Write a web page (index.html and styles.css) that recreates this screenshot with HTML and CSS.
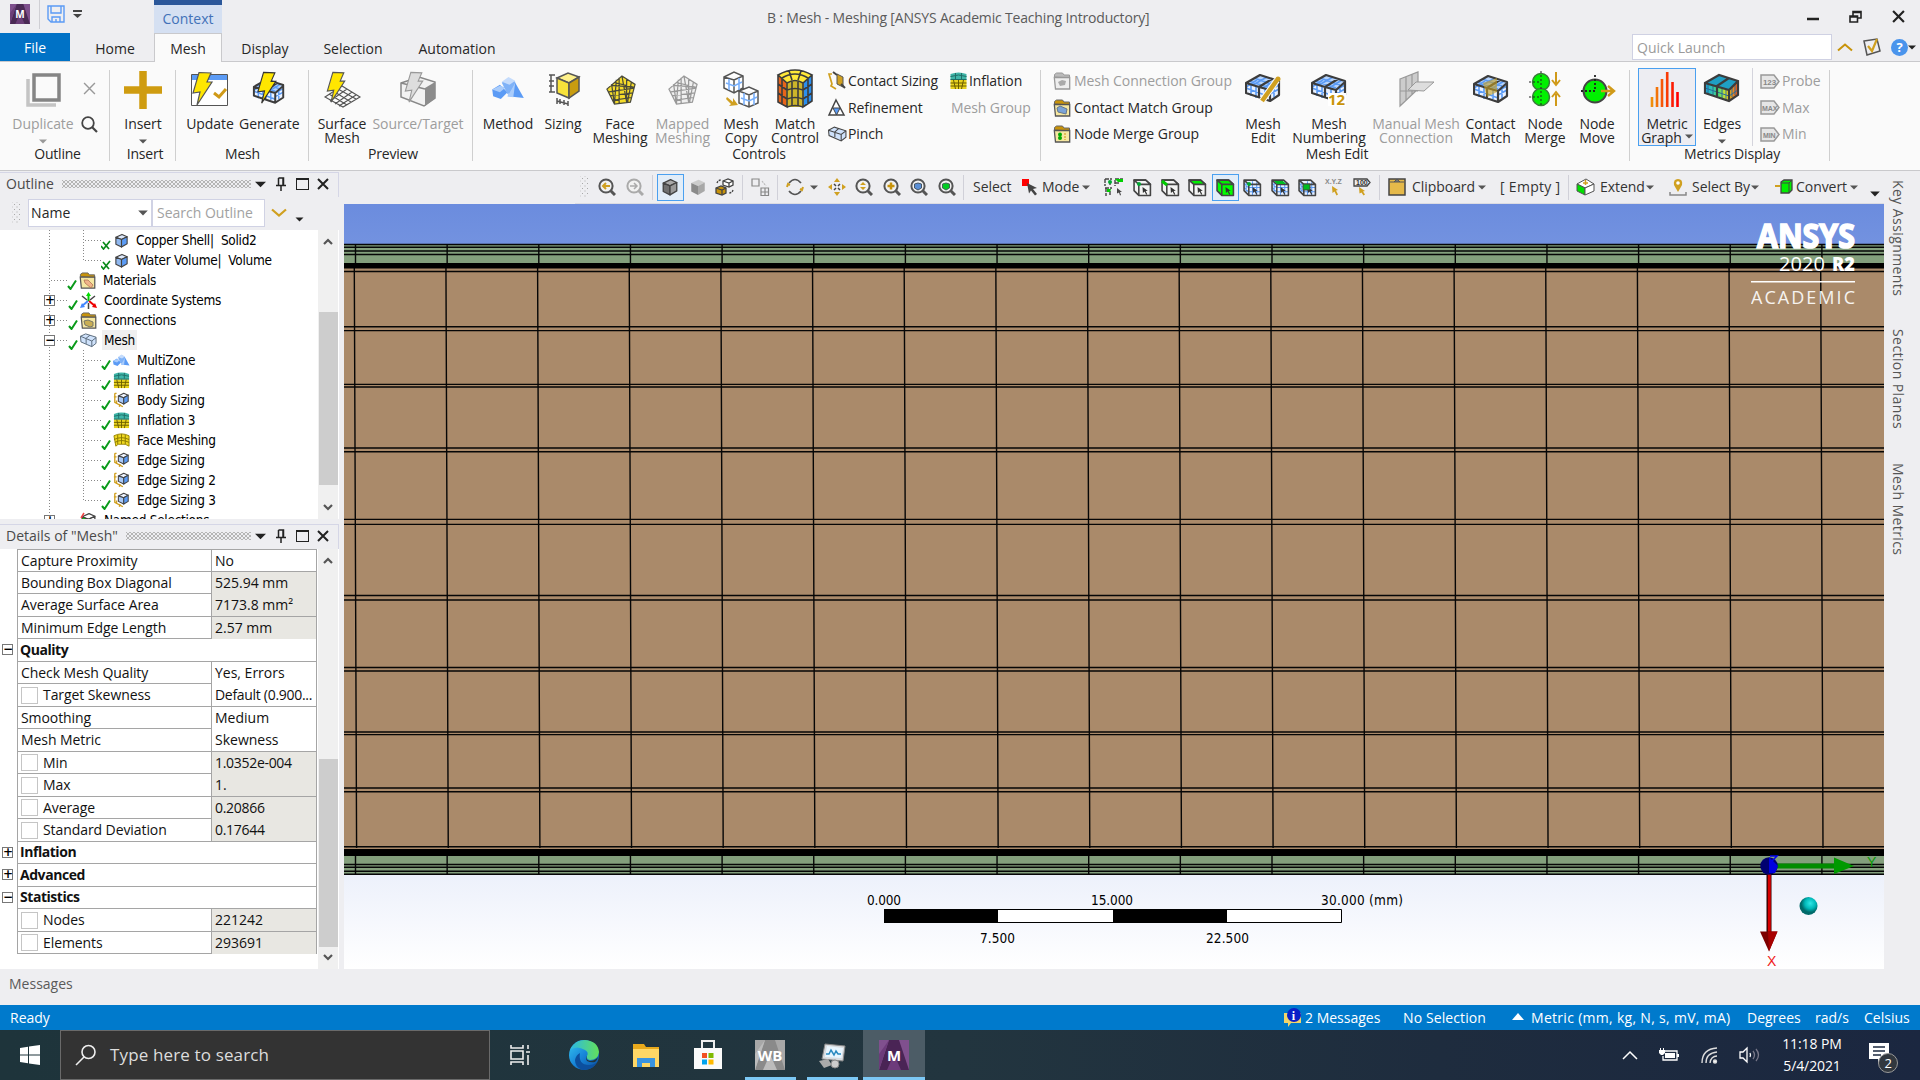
FILE: index.html
```html
<!DOCTYPE html>
<html lang="en">
<head>
<meta charset="utf-8">
<title>B : Mesh - Meshing</title>
<link rel="stylesheet" href="styles.css">
</head>
<body>
<svg class="defs" aria-hidden="true">
  <defs>
    <linearGradient id="bars" x1="0" x2="1"><stop offset="0" stop-color="#f0900c"/><stop offset="1" stop-color="#f00"/></linearGradient>
    <linearGradient id="edgeA" x1="0" y1="0" x2="1" y2="1"><stop offset="0" stop-color="#35c7f0"/><stop offset=".5" stop-color="#1784d8"/><stop offset="1" stop-color="#0c4f9e"/></linearGradient>
    <linearGradient id="edgeB" x1="0" x2="1"><stop offset="0" stop-color="#2bb8e6"/><stop offset="1" stop-color="#63e05a"/></linearGradient>
    <linearGradient id="heat" x1="0" x2="1"><stop offset="0" stop-color="#18a8e8"/><stop offset=".4" stop-color="#46dc7c"/><stop offset=".65" stop-color="#e8e020"/><stop offset="1" stop-color="#f04a18"/></linearGradient>
    <radialGradient id="cyanBall" cx=".6" cy=".35"><stop offset="0" stop-color="#2fe6e6"/><stop offset=".6" stop-color="#00b8b8"/><stop offset="1" stop-color="#006a6a"/></radialGradient>
  </defs>
  <symbol id="bolt" viewBox="0 0 36 36"><path d="M8 1.5 20 2l-4 9h5L6 34l3-13-7 1z" fill="var(--bolt,#ffe600)" stroke="var(--bline,#555)" stroke-width="1.2"/></symbol>
  <symbol id="cube" viewBox="0 0 16 16"><g stroke="var(--s,#444)" stroke-linejoin="round" stroke-width="1.2"><path d="M2 4.5 8.5 1.5 14 4 8 7z" fill="var(--t,#dde9fb)"/><path d="M2 4.5 8 7v8L2 12z" fill="var(--l,#8fb8f0)"/><path d="M8 7l6-3v7.500L8 15z" fill="var(--r,#5b9bf5)"/></g></symbol>
  <symbol id="pick" viewBox="0 0 18 18"><g fill="none" stroke="#444" stroke-width="1.500" stroke-linejoin="round"><path d="M1 2h11l4.500 4v10.500H5.500L1 12z" fill="var(--body,#f4f4f4)"/><path d="M1 2l4.500 4h11L12 2z" fill="var(--top,#f4f4f4)"/><path d="M5.500 6v10.500"/></g><path d="M9 8.500l5 3.500-2 .4 1.500 3-1 .5-1.500-3-1.600 1.300z" fill="#333"/></symbol>
  <symbol id="pickmesh" viewBox="0 0 18 18"><path d="M1 2h11l4.500 4v10.500H5.500L1 12z" fill="#e8f1ff"/><path d="M1 5l4 4h12M1 9l4 4h12M9 3v14M13 4v13M3 4v9" stroke="#5b9bf5" fill="none"/><g fill="none" stroke="#444" stroke-width="1.500" stroke-linejoin="round"><path d="M1 2h11l4.500 4v10.500H5.500L1 12zM1 2l4.500 4h11M5.500 6v10.500"/></g><path d="M9 8.500l5 3.500-2 .4 1.500 3-1 .5-1.500-3-1.600 1.300z" fill="#333"/></symbol>
  <symbol id="lens" viewBox="0 0 18 18"><circle cx="8" cy="8" r="6.600" fill="#f2f2f2" stroke="var(--s,#555)" stroke-width="2"/><path d="M12.500 12.500 17 17" stroke="var(--s,#555)" stroke-width="3"/></symbol>
  <symbol id="meshbox" viewBox="0 0 36 36"><path d="M1 11 15 3l19 6v14l-9 6L1 21z" fill="#eaf2ff"/><path d="M1 11 15 3l19 6-9 9z" fill="#b5d3fb"/><path d="M4 9l21 7M9 6l20 7M12 8 1 15m24 3 9-5M25 22l9-5M6 12v12M11 14v12M20 16v10M29 13v12M1 16l24 9M8 13 22 5M18 16 31 8" stroke="#5b9bf5" stroke-width="1.600" fill="none"/><path d="M1 11 15 3l19 6v14l-9 6L1 21zM1 11l13 4 11 3 9-8M14 15 27 7M14 15v11M25 18v11" fill="none" stroke="#3c3c3c" stroke-width="2.200" stroke-linejoin="round"/></symbol>
  <symbol id="folder" viewBox="0 0 17 18"><path d="M1 5V2.500L3 1h6l1.500 2H16v3z" fill="var(--f1,#c8930a)" stroke="var(--fs,#666)"/><path d="M.8 5.500h15.400V17H2z" fill="var(--f2,#f6e7a1)" stroke="var(--fs,#555)" stroke-width="1.300"/></symbol>
  <symbol id="penta" viewBox="0 0 32 32"><path d="M17 1 31 10l-5 19-17 2L1 15z" fill="var(--pf,#f5dc2a)"/><path d="M17 1 31 10l-5 19-17 2L1 15zM11 5l-2 26M14 3l0 27M17 1l5 28M22 4l0 25M27 8l-4 21M3 18l27-4M5 22l24-3M7 27l20-3M5 11l25 2M9 8l20 5M6 10l3 21" fill="none" stroke="var(--ps,#4a4a3a)" stroke-width="1.300"/></symbol>
  <symbol id="layers" viewBox="0 0 18 18"><path d="M1 2q8-3 16 0v6H1z" fill="#3fb5a8"/><path d="M1 8h16v9H1z" fill="#e8d21f"/><path d="M1 4.500q8-3 16 0M1 7.500h16M6 1v6M12 1v6" stroke="#1f6f68" fill="none"/><path d="M1 11h16M1 14h16M4 8l2 9M9 8v9M14 8l-2 9" stroke="#6b5d00" fill="none"/></symbol>
  <symbol id="check" viewBox="0 0 10 11"><path d="M1 7l2.500 3L9 1.500" stroke="#0a9a1a" stroke-width="2" fill="none"/></symbol>
  <symbol id="xcheck" viewBox="0 0 10 11"><path d="M0 7l2.500 3L9 2M2 3l6 7" stroke="#0a8a1a" stroke-width="1.700" fill="none"/></symbol>
  <symbol id="sizing" viewBox="0 0 19 18"><path d="M2 1v10l9 5M2 1h2M1 5h3M4 9v4M8 13l-1 3" stroke="#d0a020" stroke-width="1.500" fill="none"/><g stroke="#444" stroke-width="1.200" stroke-linejoin="round"><path d="M6 4l6-3 5 2-5 3z" fill="#eef4ff"/><path d="M6 4l6 2v7l-6-3z" fill="#a9c9f8"/><path d="M12 6l5-3v7l-5 3z" fill="#5b9bf5"/></g></symbol>
  <symbol id="method" viewBox="0 0 34 24"><path d="M0 13l8-5 8 8-7 7-8-3z" fill="#5b9bf5"/><path d="M0 13l8-4 6 2-6 5z" fill="#a9ccfb"/><path d="M10 6l7-5 7 4v9l-8 4z" fill="#7fb2f7"/><path d="M10 5l7-5 7 4-6 4z" fill="#c5dcfc"/><path d="M24 6l9 16-17-2z" fill="#5b9bf5"/><path d="M24 6l-8 14 6 1z" fill="#a9ccfb"/></symbol>
  <symbol id="car" viewBox="0 0 8 5"><path d="M0 .5h8L4 4.500z" fill="var(--c,#555)"/></symbol>
  <symbol id="chev" viewBox="0 0 10 7"><path d="M1 6l4-4 4 4" fill="none" stroke="#555" stroke-width="2.200"/></symbol>
  <symbol id="pin" viewBox="0 0 10 14"><path d="M2.500 1h5v7M2.500 1v7M7 1v7M0 8.500h10M5 9v5" stroke="#222" stroke-width="1.500" fill="none"/></symbol>
  <symbol id="close" viewBox="0 0 12 12"><path d="M1 1l10 10M11 1L1 11" stroke="#222" stroke-width="2" fill="none"/></symbol>
  <symbol id="tag" viewBox="0 0 20 15"><path d="M1 1h13l5 6.500-5 6.500H1z" fill="#e6e6e6" stroke="#999" stroke-width="1.500"/></symbol>
  <symbol id="tile" viewBox="0 0 30 30"><path d="M0 0h30v30H0z" fill="var(--a)"/><path d="M10 0h10l10 30H0z" fill="var(--b)"/><path d="M15 14l7 16H8zM10 0L0 30V14z" fill="var(--d)"/></symbol>
</svg>

<div class="app">
  <header class="top">
    <div class="titlebar">
      <div class="quick">
        <svg width="20" height="20" style="--a:#7d4f8c;--b:#4a2a55;--d:#6b3f78"><use href="#tile"/><text x="10" y="14" class="tile-m small">M</text></svg>
        <i class="vline"></i>
        <svg width="18" height="18" viewBox="0 0 18 18" fill="none" stroke="#5b9bf5" stroke-width="1.400"><path d="M1 1h16v16H4l-3-3zM4 1v7h10V1M5 17v-5h8v5M9 14v3"/></svg>
        <svg width="9" height="8" viewBox="0 0 9 8"><path d="M0 0h9v2H0zM0 4h9L4.500 8z" fill="#444"/></svg>
      </div>
      <div class="context">Context</div>
      <div class="title">B : Mesh - Meshing [ANSYS Academic Teaching Introductory]</div>
      <div class="winbtns">
        <svg width="12" height="12" viewBox="0 0 12 12"><path d="M0 9h12" stroke="#222" stroke-width="2.500"/></svg>
        <svg width="13" height="13" viewBox="0 0 13 13" fill="none" stroke="#222" stroke-width="1.600"><path d="M1 6h7.500v6H1zM4 6V1.500h8V8H9M4 2.500h8M1 7h7"/></svg>
        <svg width="13" height="13"><use href="#close"/></svg>
      </div>
    </div>
    <nav class="tabs">
      <span class="tab file">File</span><span class="tab t-home">Home</span><span class="tab active">Mesh</span><span class="tab t-disp">Display</span><span class="tab t-sel">Selection</span><span class="tab t-auto">Automation</span>
      <div class="launch">
        <span class="launch-box">Quick Launch</span>
        <svg width="16" height="10" viewBox="0 0 16 10"><path d="M1 8.500l7-6 7 6" fill="none" stroke="#c8930a" stroke-width="2"/></svg>
        <svg width="18" height="18" viewBox="0 0 18 18" fill="none"><path d="M1 3l13-2 3 12-13 4z" stroke="#555" stroke-width="1.500"/><path d="M5 8l4 5 5-12" stroke="#d0a020" stroke-width="2.200"/></svg>
        <span class="help"><b>?</b><svg width="8" height="5" style="--c:#222"><use href="#car"/></svg></span>
      </div>
    </nav>
  </header>

  <section class="ribbon">
    <div class="group g-outline">
      <div class="items">
        <div class="item off"><svg class="ic" viewBox="0 0 36 36"><path d="M3 8v26h28" fill="none" stroke="#c4c4c4" stroke-width="3.500"/><path d="M9 4h25v25H9z" fill="#fafafa" stroke="#858585" stroke-width="3.500"/></svg>Duplicate<svg class="dn" style="--c:#999"><use href="#car"/></svg></div>
        <div class="pair"><svg width="13" height="13" viewBox="0 0 12 12"><path d="M1 1l10 10M11 1L1 11" stroke="#999" stroke-width="1.300"/></svg><svg width="17" height="17" viewBox="0 0 17 17" fill="none" stroke="#444"><circle cx="7" cy="7" r="5.800" stroke-width="1.800"/><path d="M11 11l5 5" stroke-width="2.200"/></svg></div>
      </div>
      <div class="label">Outline</div>
    </div>
    <div class="group g-insert">
      <div class="items"><div class="item"><svg class="ic" viewBox="0 0 36 36"><path d="M18 0v38M-1 19h38" stroke="#cf9c10" stroke-width="7.500"/></svg>Insert<svg class="dn"><use href="#car"/></svg></div></div>
      <div class="label">Insert</div>
    </div>
    <div class="group g-mesh">
      <div class="items">
        <div class="item"><svg class="ic" viewBox="0 0 36 36"><path d="M-.5 3.500h36v31h-36z" fill="#fff" stroke="#555"/><path d="M0 4h35v5H0z" fill="#5b9bf5"/><path d="M22 22l5 4 7-8" fill="none" stroke="#d09a18" stroke-width="3"/><use href="#bolt" width="36" height="36" x="-1"/></svg>Update</div>
        <div class="item"><svg class="ic" viewBox="0 0 36 36"><use href="#meshbox" y="6" width="36" height="32"/><use href="#bolt" x="4" width="36" height="34" style="--bline:#333"/></svg>Generate</div>
      </div>
      <div class="label">Mesh</div>
    </div>
    <div class="group g-preview">
      <div class="items">
        <div class="item"><svg class="ic" viewBox="0 0 36 36"><g fill="none" stroke="#555" stroke-width="1.100"><path d="M1 26l17-11 18 11-17 10zM5 23l18 11M9 20l18 11M14 18l18 10M6 30l17-12M11 33l17-12M15 35l17-11"/></g><use href="#bolt" width="36" height="33"/></svg>Surface<br>Mesh</div>
        <div class="item off"><svg class="ic" viewBox="0 0 36 36"><path d="M1 12l18-6 16 5v16L24 35 1 26z" fill="#f2f2f2" stroke="#888" stroke-width="1.500"/><path d="M25 17l10-6v16l-10 8z" fill="#8c8c8c"/><path d="M1 12l24 6" stroke="#888" stroke-width="1.500"/><use href="#bolt" width="36" height="33" x="2" style="--bolt:#ddd;--bline:#999"/></svg>Source/Target</div>
      </div>
      <div class="label">Preview</div>
    </div>
    <div class="group g-controls">
      <div class="items">
        <div class="item"><svg class="ic" viewBox="0 0 36 36"><use href="#method" x="2" y="6" width="33" height="23"/></svg>Method</div>
        <div class="item"><svg class="ic" viewBox="0 0 36 36"><g stroke="#555" stroke-width="1.500"><path d="M12 7 23 2l11 4-10 6z" fill="#fdf08a"/><path d="M12 7l12 5v15l-12-5z" fill="#f7e23a"/><path d="M24 12l10-6v14l-10 7z" fill="#c89c10"/><path d="M6 4v17M4 4h6M4 10h5M4 15h5M4 21h6M12 27v6M23 30v5M12 30l11 3M15 28v5M19 29v5" fill="none"/></g></svg>Sizing</div>
        <div class="item"><svg class="ic" viewBox="0 0 36 36"><use href="#penta" x="4" y="4" width="30" height="30"/></svg>Face<br>Meshing</div>
        <div class="item off"><svg class="ic" viewBox="0 0 36 36"><use href="#penta" x="3" y="4" width="30" height="30" style="--pf:#efefef;--ps:#999"/></svg>Mapped<br>Meshing</div>
        <div class="item"><svg class="ic" viewBox="0 0 36 36"><g stroke="#555" stroke-width="1.500" fill="#fff"><path d="M1 6l10-5 9 4v12l-9 5-10-5zM1 6l10 3 9-4M11 9v13M16 20l10-4 9 4v12l-9 4-10-4zM16 20l10 4 9-4M26 24v12"/></g><path d="M3 12l8 3 8-4M6 8v11M16 7v12M18 27l8 3 8-4M21 22v12M31 22v12" stroke="#7ab0fa" stroke-width="1.600" fill="none"/><path d="M4 26l6 5v-4l5 7-9 1 2-2-5-5z" fill="#d0a020"/></svg>Mesh<br>Copy</div>
        <div class="item"><svg class="ic big" viewBox="0 0 36 40"><path d="M1 6l8 6v26l-8-5z" fill="#e8641a"/><path d="M9 12l18 0v26H9z" fill="#cdb52a"/><path d="M27 12l8-6v26l-8 6z" fill="#2a8ff0"/><path d="M1 6q17-10 34 0l-9 8q-8-5-16 0z" fill="#ffe838"/><path d="M1 6q17-10 34 0l-9 8q-8-5-16 0zM5 9q13-8 26 0M12 2l3 9M24 2l-3 9M1 6v27l9 5V13M35 6v26l-9 6V13M5 10v25M31 10v25M1 15l9 6q8-3 16 0l9-6M1 24l9 6q8-3 16 0l9-6M10 38q8-3 16 0M15 12v25M21 12v25" fill="none" stroke="#3c3c3c" stroke-width="1.600"/></svg>Match<br>Control</div>
        <div class="stack">
          <div class="row"><svg width="19" height="18" viewBox="0 0 19 18"><path d="M4 2H1l3 10-1 2 5 3" fill="none" stroke="#d0a020" stroke-width="1.700"/><path d="M9 2l6 3v10l-6-3z" fill="#d0a020" stroke="#555"/><path d="M5 0l4 3M13 12l4 4" stroke="#444" stroke-width="2"/></svg>Contact Sizing</div>
          <div class="row"><svg width="19" height="18" viewBox="0 0 19 18"><path d="M8 1l8 15H1z" fill="#fff" stroke="#444" stroke-width="1.500"/><path d="M5 9h7l-3.500 7z" fill="#5b9bf5" stroke="#444"/></svg>Refinement</div>
          <div class="row"><svg width="19" height="18" viewBox="0 0 36 34"><path d="M1 10 12 4l22 7v12l-9 7L2 20z" fill="#cfe2fb" stroke="#444" stroke-width="2"/><path d="M1 10l24 8 9-7M25 18v12M12 14l8-7M13 14v9" fill="none" stroke="#444" stroke-width="2"/></svg>Pinch</div>
        </div>
        <div class="stack s2">
          <div class="row"><svg width="19" height="18"><use href="#layers"/></svg>Inflation</div>
          <div class="row off nog">Mesh Group</div>
        </div>
      </div>
      <div class="label">Controls</div>
    </div>
    <div class="group g-edit">
      <div class="items">
        <div class="stack">
          <div class="row off"><svg width="18" height="18" style="--f1:#bbb;--f2:#eee;--fs:#999"><use href="#folder"/><path d="M5 10l4-2 4 1-1 4-5 1z" fill="#aaa"/></svg>Mesh Connection Group</div>
          <div class="row"><svg width="18" height="18"><use href="#folder"/><path d="M4 9l3-2 7 3-1 5-8-2z" fill="#7ba3d8" stroke="#678"/></svg>Contact Match Group</div>
          <div class="row"><svg width="18" height="18"><use href="#folder"/><circle cx="7" cy="9.500" r="2" fill="#0a0"/><circle cx="7" cy="13" r="2" fill="#0a0"/><path d="M12 8v7" stroke="#c8930a" stroke-dasharray="2 1"/></svg>Node Merge Group</div>
        </div>
        <div class="item"><svg class="ic" viewBox="0 0 36 36"><use href="#meshbox" y="1" width="36" height="36"/><path d="M17 30 32 9" stroke="#fafafa" stroke-width="6.500"/><path d="M17 30 32 9" stroke="#d0a020" stroke-width="4.500"/><circle cx="33" cy="8" r="2.500" fill="#d0a020"/></svg>Mesh<br>Edit</div>
        <div class="item"><svg class="ic" viewBox="0 0 36 36"><use href="#meshbox" y="1" width="36" height="36"/><path d="M17 22h18v13H17z" fill="#fff"/><text x="17" y="34" class="n12">12</text></svg>Mesh<br>Numbering</div>
        <div class="item off"><svg class="ic" viewBox="0 0 36 36"><path d="M2 8l18-7v17L2 35zM8 6v23M14 3v20M2 20h18" fill="#ccc" stroke="#999" stroke-width="1.200"/><path d="M10 19l8-8h18l-10 9z" fill="#ddd" stroke="#999"/></svg>Manual Mesh<br>Connection</div>
        <div class="item"><svg class="ic" viewBox="0 0 36 36"><use href="#meshbox" y="2" width="36" height="36"/><path d="M10 12l14-5v14l-10 5z" fill="#c8a020" opacity=".6"/></svg>Contact<br>Match</div>
        <div class="item"><svg class="ic" viewBox="0 0 36 36"><g stroke="#3a7a3a" stroke-width="1.500"><circle cx="14" cy="11" r="8.500" fill="#00f000"/><circle cx="14" cy="26" r="8.500" fill="#00f000"/></g><path d="M14 0v36M2 11h12M2 26h12" stroke="#222" stroke-dasharray="2 2"/><path d="M29 1v12M25 9l4 5 4-5M29 35V23M25 26l4-5 4 5" stroke="#d09a18" stroke-width="2" fill="none"/></svg>Node<br>Merge</div>
        <div class="item"><svg class="ic" viewBox="0 0 36 36"><circle cx="16" cy="20" r="11.500" fill="#00f000" stroke="#444" stroke-width="2"/><path d="M16 4v16H0" fill="none" stroke="#222" stroke-width="1.800" stroke-dasharray="2 2"/><path d="M22 20h12M29 15l6 5-6 5" stroke="#d09a18" stroke-width="2.400" fill="none"/></svg>Node<br>Move</div>
      </div>
      <div class="label">Mesh Edit</div>
    </div>
    <div class="group g-metrics">
      <div class="items">
        <div class="item on"><svg class="ic" viewBox="0 0 36 36"><path d="M3 36V26M8 36V16M13 36V8M18.200 36V1M23.500 36V11M28.500 36V21" stroke="url(#bars)" stroke-width="2.600"/></svg>Metric<br>Graph<svg class="in"><use href="#car"/></svg></div>
        <div class="item edges"><svg class="ic" viewBox="0 0 36 36"><path d="M1 12 15 4l19 6v14l-9 6L1 22z" fill="url(#heat)"/><path d="M4 13v9M9 14v10M18 18v9M22 19v10M28 14v12M31 13v11M1 17l24 8 9-6" stroke="#2a6a9a" fill="none"/><path d="M1 12l14-8 19 6-9 9z" fill="#1f9fc4"/><path d="M1 12 15 4l19 6v14l-9 6L1 22zM1 12l24 7 9-9M13 15l12-8M13 16v11M25 19v11" fill="none" stroke="#3c3c3c" stroke-width="2.200"/></svg>Edges<svg class="dn"><use href="#car"/></svg></div>
        <i class="isep"></i>
        <div class="stack off">
          <div class="row"><svg width="20" height="15"><use href="#tag"/><text x="3" y="11" class="tg">123</text></svg>Probe</div>
          <div class="row"><svg width="20" height="15"><use href="#tag"/><text x="2" y="10.500" class="tg s">MAX</text></svg>Max</div>
          <div class="row"><svg width="20" height="15"><use href="#tag"/><text x="3" y="10.500" class="tg s">MIN</text></svg>Min</div>
        </div>
      </div>
      <div class="label">Metrics Display</div>
    </div>
  </section>

  <main class="work">
    <aside class="left">
      <div class="phead"><span>Outline</span><i class="dots"></i><svg width="11" height="7" style="--c:#222"><use href="#car"/></svg><svg width="10" height="14"><use href="#pin"/></svg><i class="sq"></i><svg width="12" height="12"><use href="#close"/></svg></div>
      <div class="find"><i class="grip"></i><span class="combo">Name<svg width="10" height="6"><use href="#car"/></svg></span><span class="search">Search Outline</span><svg width="16" height="10" viewBox="0 0 16 10"><path d="M1 1.500l7 6 7-6" fill="none" stroke="#d0a020" stroke-width="2.200"/></svg><svg class="low" width="9" height="5" style="--c:#222"><use href="#car"/></svg></div>
      <div class="scroller treebox">
        <ul class="tree">
          <li class="l3"><i class="tw"></i><svg class="ck"><use href="#xcheck"/></svg><svg class="ti cb"><use href="#cube"/></svg><span>Copper Shell|&nbsp; Solid2</span></li>
          <li class="l3 end"><i class="tw"></i><svg class="ck"><use href="#xcheck"/></svg><svg class="ti cb"><use href="#cube"/></svg><span>Water Volume|&nbsp; Volume</span></li>
          <li class="l2"><i class="tw"></i><svg class="ck"><use href="#check"/></svg><svg class="ti"><use href="#folder"/><path d="M5 8h4l5 5-2 3-6-5z" fill="#f0b48a" stroke="#a86a4a" stroke-width=".7"/></svg><span>Materials</span></li>
          <li class="l2"><b class="pm">+</b><i class="tw"></i><svg class="ck"><use href="#check"/></svg><svg class="ti" viewBox="0 0 17 17"><path d="M8.500 9V2" stroke="#0c0" stroke-width="2"/><path d="M6 4l2.500-4L11 4z" fill="#0d0"/><path d="M8 9l-6 5" stroke="#48f" stroke-width="2"/><path d="M0 16l2-5 3 4z" fill="#48f"/><path d="M9 9l6 5" stroke="#e00" stroke-width="2"/><path d="M17 16l-5-1 3-4z" fill="#e00"/><path d="M2 4l5 4M15 4l-5 4M8.500 11v6" stroke="#444" stroke-width="1.500"/></svg><span>Coordinate Systems</span></li>
          <li class="l2"><b class="pm">+</b><i class="tw"></i><svg class="ck"><use href="#check"/></svg><svg class="ti"><use href="#folder"/><path d="M4 9l4-1 5 2v4l-3 1-5-2z" fill="#c9ae55" stroke="#776"/></svg><span>Connections</span></li>
          <li class="l2"><b class="pm">−</b><i class="tw"></i><svg class="ck"><use href="#check"/></svg><svg class="ti" viewBox="0 0 36 34"><path d="M1 8 12 3l22 7v13l-9 7L2 20z" fill="#cfe2fb" stroke="#567" stroke-width="2"/><path d="M1 8l24 10 9-7M25 18v12M12 13l9-7M13 14v10" fill="none" stroke="#567" stroke-width="2"/></svg><span class="cur">Mesh</span></li>
          <li class="l3"><i class="tw"></i><svg class="ck"><use href="#check"/></svg><svg class="ti"><use href="#method"/></svg><span>MultiZone</span></li>
          <li class="l3"><i class="tw"></i><svg class="ck"><use href="#check"/></svg><svg class="ti"><use href="#layers"/></svg><span>Inflation</span></li>
          <li class="l3"><i class="tw"></i><svg class="ck"><use href="#check"/></svg><svg class="ti"><use href="#sizing"/></svg><span>Body Sizing</span></li>
          <li class="l3"><i class="tw"></i><svg class="ck"><use href="#check"/></svg><svg class="ti"><use href="#layers"/></svg><span>Inflation 3</span></li>
          <li class="l3"><i class="tw"></i><svg class="ck"><use href="#check"/></svg><svg class="ti" viewBox="0 0 18 18"><path d="M1 4q8-4 16 0v11q-4-3-8-2-4-1-6 2z" fill="#f0d820" stroke="#998400"/><path d="M1 8q8-4 16 0M2 11q7-4 15 0M5 3v10M9 2v11M13 3v10" fill="none" stroke="#8a7a00"/></svg><span>Face Meshing</span></li>
          <li class="l3"><i class="tw"></i><svg class="ck"><use href="#check"/></svg><svg class="ti"><use href="#sizing"/></svg><span>Edge Sizing</span></li>
          <li class="l3"><i class="tw"></i><svg class="ck"><use href="#check"/></svg><svg class="ti"><use href="#sizing"/></svg><span>Edge Sizing 2</span></li>
          <li class="l3 end"><i class="tw"></i><svg class="ck"><use href="#check"/></svg><svg class="ti"><use href="#sizing"/></svg><span>Edge Sizing 3</span></li>
          <li class="l2"><b class="pm">+</b><i class="tw none"></i><svg class="ck"></svg><svg class="ti"><use href="#cube" style="--l:#0d0;--t:#fff;--r:#fff"/><path d="M4 1L1 6" stroke="#e44" stroke-width="1.500"/></svg><span>Named Selections</span></li>
        </ul>
        <div class="sbar"><svg width="10" height="7"><use href="#chev"/></svg><i class="thumb th1"></i><svg class="flip" width="10" height="7"><use href="#chev"/></svg></div>
      </div>
      <div class="phead ph2"><span>Details of "Mesh"</span><i class="dots"></i><svg width="11" height="7" style="--c:#222"><use href="#car"/></svg><svg width="10" height="14"><use href="#pin"/></svg><i class="sq"></i><svg width="12" height="12"><use href="#close"/></svg></div>
      <div class="scroller detbox">
        <div class="details">
          <div class="d"><span>Capture Proximity</span><em class="w">No</em></div>
          <div class="d"><span>Bounding Box Diagonal</span><em>525.94 mm</em></div>
          <div class="d"><span>Average Surface Area</span><em>7173.8 mm²</em></div>
          <div class="d"><span>Minimum Edge Length</span><em>2.57 mm</em></div>
          <div class="d h"><b class="pm">−</b><span>Quality</span></div>
          <div class="d"><span>Check Mesh Quality</span><em class="w">Yes, Errors</em></div>
          <div class="d c"><span>Target Skewness</span><em class="w n">Default (0.900...</em></div>
          <div class="d"><span>Smoothing</span><em class="w">Medium</em></div>
          <div class="d"><span>Mesh Metric</span><em class="w">Skewness</em></div>
          <div class="d c"><span>Min</span><em class="n">1.0352e-004</em></div>
          <div class="d c"><span>Max</span><em>1.</em></div>
          <div class="d c"><span>Average</span><em class="n">0.20866</em></div>
          <div class="d c"><span>Standard Deviation</span><em class="n">0.17644</em></div>
          <div class="d h"><b class="pm">+</b><span>Inflation</span></div>
          <div class="d h"><b class="pm">+</b><span>Advanced</span></div>
          <div class="d h"><b class="pm">−</b><span>Statistics</span></div>
          <div class="d c"><span>Nodes</span><em>221242</em></div>
          <div class="d c"><span>Elements</span><em>293691</em></div>
        </div>
        <div class="sbar"><svg width="10" height="7"><use href="#chev"/></svg><i class="thumb th2"></i><svg class="flip" width="10" height="7"><use href="#chev"/></svg></div>
      </div>
    </aside>

    <section class="center">
      <div class="toolbar">
        <i class="grip"></i>
        <svg width="18" height="18"><use href="#lens"/><path d="M12 8H5M8 5L5 8l3 3" stroke="#d0a020" stroke-width="2" fill="none"/></svg>
        <svg width="18" height="18" style="--s:#aaa"><use href="#lens"/><path d="M4 8h7M8 5l3 3-3 3" stroke="#aaa" stroke-width="1.500" fill="none"/></svg>
        <i class="s"></i>
        <span class="sel"><svg width="18" height="18" style="--t:#aaa;--l:#707070;--r:#999"><use href="#cube"/></svg></span>
        <svg width="18" height="18" style="--t:#ccc;--l:#8a8a8a;--r:#a8a8a8;--s:none"><use href="#cube"/></svg>
        <svg width="20" height="18" viewBox="0 0 20 18"><g stroke="#444" stroke-width="1.300"><path d="M8 3l5-2 5 2v4l-4 2-6-2z" fill="#fff"/><path d="M8 3l6 2 4-2M14 5v4" fill="none"/><path d="M1 10l5-2 5 2v5l-4 2-6-2z" fill="#c8930a"/><path d="M1 10l6 2 4-2M7 12v5" fill="none"/><path d="M2 5q1-3 4-3M18 12q-1 3-4 3" fill="none" stroke-dasharray="2 1"/></g></svg>
        <i class="s"></i>
        <svg width="18" height="18" viewBox="0 0 18 18" fill="none" stroke="#888" stroke-width="1.200"><path d="M1 1h7v7H1zM10 10h7.500v7.500H10zM10 14h7M14 10v7"/><path d="M11 3l4 5" stroke="#bbb" stroke-dasharray="2 1"/></svg>
        <i class="s"></i>
        <svg width="18" height="18" viewBox="0 0 18 18" fill="none" stroke="#555" stroke-width="1.700"><path d="M3 5q6-7 12 0M15 13q-6 7-12 0"/><path d="M1 9l1-3 2 1M17 9l-1 3-2-1" stroke="#d0a020" stroke-width="2"/></svg>
        <svg class="cr"><use href="#car"/></svg>
        <svg width="18" height="18" viewBox="0 0 18 18"><path d="M9 0l3 4H6zM9 18l3-4H6zM0 9l4-3v6zM18 9l-4-3v6z" fill="#d0a020"/><path d="M6 6l2 2M12 6l-2 2M6 12l2-2M12 12l-2-2" stroke="#444" stroke-width="1.500"/></svg>
        <svg width="18" height="18"><use href="#lens"/><path d="M5 7l3-3 3 3zM5 9l3 3 3-3z" fill="#d0a020"/></svg>
        <svg width="18" height="18"><use href="#lens"/><path d="M8 4.500v7M4.500 8h7" stroke="#c8930a" stroke-width="2.500"/></svg>
        <svg width="18" height="18"><use href="#lens"/><path d="M4.500 6L8 5l3.500 1v4L8 12l-3.500-2z" fill="#5b8fd5" stroke="#456"/></svg>
        <svg width="18" height="18"><use href="#lens"/><path d="M4.500 6L8 5l3.500 1v4L8 12l-3.500-2z" fill="#0c2" stroke="#465"/></svg>
        <i class="s"></i>
        <span class="tx p6">Select</span>
        <svg width="17" height="18" viewBox="0 0 17 18"><path d="M1 1h7v7H1z" fill="red"/><path d="M6 5l10 5-4 1 4 5-2 1.500-4-5-2 3z" fill="#444"/></svg>
        <span class="tx">Mode</span><svg class="cr"><use href="#car"/></svg>
        <svg width="20" height="18" viewBox="0 0 20 18"><path d="M1 1h7M1 1v7M11 1h8M11 2v6M1 10h7M2 10v8M6 4v3M11 5h5M6 13v5" stroke="#444" stroke-width="1.400" fill="none" stroke-dasharray="4 1"/><path d="M11 1h8v3h-5zM3 11h4l-1 3H3z" fill="#00d000"/><circle cx="6" cy="4" r="2" fill="#0a3"/><path d="M13 10l5 4-2 0 1 3-1 .5-1-3-2 1z" fill="#444"/></svg>
        <svg width="19" height="19"><use href="#pick"/><circle cx="6" cy="6" r="2" fill="#0a3"/></svg>
        <svg width="19" height="19"><use href="#pick"/><path d="M1 3l5 4" stroke="#0c0" stroke-width="3"/></svg>
        <svg width="19" height="19" style="--top:#0e0"><use href="#pick"/></svg>
        <span class="sel"><svg width="19" height="19" style="--top:#0e0;--body:#0f0"><use href="#pick"/></svg></span>
        <svg width="19" height="19"><use href="#pickmesh"/><circle cx="6" cy="6" r="2" fill="#0a3"/></svg>
        <svg width="19" height="19"><use href="#pickmesh"/><path d="M3 3h9l3 3H6z" fill="#0b2"/></svg>
        <svg width="19" height="19"><use href="#pickmesh"/><path d="M5 6h7v6H5z" fill="#0b2" stroke="#444"/></svg>
        <svg width="20" height="18" viewBox="0 0 20 18"><text x="0" y="6" class="xyz">X.Y.Z</text><path d="M7 8l6 4-2 .5 2 4-1.500 1-2-4-2 1.500z" fill="#d0a020"/></svg>
        <svg width="18" height="18" viewBox="0 0 18 18"><path d="M1 1h13l3 3.500L14 8H1z" fill="#eee" stroke="#444" stroke-width="1.300"/><text x="3" y="7" class="xyz d">100</text><path d="M6 9l6 4-2 .5 2 3-1.500 1-2-3-2 1z" fill="#d0a020"/></svg>
        <i class="s"></i>
        <svg width="18" height="18" viewBox="0 0 18 18"><path d="M1 1h16v16H1z" fill="#e5b94a" stroke="#444" stroke-width="1.500"/><path d="M2 4h14M6 4l3-3 3 3" stroke="#555" fill="#777"/></svg>
        <span class="tx">Clipboard</span><svg class="cr"><use href="#car"/></svg>
        <span class="tx emp">[ Empty ]</span>
        <i class="s"></i>
        <svg width="19" height="18" viewBox="0 0 19 18"><g stroke="#555"><path d="M1 6l9-5 8 5-9 4z" fill="#fff"/><path d="M1 6l8 4v7l-8-4z" fill="#00e000"/><path d="M9 10l9-4v7l-9 4z" fill="#fff"/></g><path d="M9.500 2v5M7 5h5" stroke="#d0a020" stroke-width="1.500"/></svg>
        <span class="tx">Extend</span><svg class="cr"><use href="#car"/></svg>
        <svg width="18" height="18" viewBox="0 0 18 18"><path d="M1 14v3h16v-3" stroke="#888" stroke-width="1.500" fill="none"/><path d="M9 14L5 7Q4 1 9 1t4 6z" fill="#d0a020"/><circle cx="9" cy="5" r="1.800" fill="#fff"/></svg>
        <span class="tx">Select By</span><svg class="cr"><use href="#car"/></svg>
        <svg width="18" height="16" viewBox="0 0 18 16"><path d="M0 7h5" stroke="#d0a020" stroke-width="2"/><path d="M6 3l3-2h8v10l-3 3H6z" fill="#0e0" stroke="#444" stroke-width="1.300"/><path d="M6 4h8v10M14 4l3-3" fill="none" stroke="#444"/></svg>
        <span class="tx">Convert</span><svg class="cr"><use href="#car"/></svg>
        <svg class="more" width="10" height="6" style="--c:#222"><use href="#car"/></svg>
      </div>
      <div class="view">
        <svg class="mesh" viewBox="344 204 1540 765">
          <path d="M344 244h1540v22H344z" fill="#839f7c"/><path d="M344 853h1540v22H344z" fill="#839f7c"/>
          <path d="M344 266h1540v586H344z" fill="#aa8a6a"/>
          <g fill="none" stroke="#060606" stroke-width="1.400">
            <path d="M344 244.500h1540M344 247.200h1540M344 251h1540M344 254.500h1540M344 271.500h1540" stroke-width="1.500"/>
            <path d="M344 846.700h1540M344 864.500h1540M344 867.300h1540M344 871.300h1540M344 874.300h1540" stroke-width="1.500"/>
            <path d="M344 326.800h1540M344 330.600h1540M344 384.400h1540M344 387h1540M344 448h1540M344 451.800h1540M344 519.400h1540M344 524.400h1540M344 595.500h1540M344 600h1540M344 667.500h1540M344 671h1540M344 732h1540M344 734.600h1540M344 788h1540M344 791.800h1540"/>
            <path d="M354.300 268l2.300 580m89.350-580l2.300 580m89.350-580l2.300 580m89.350-580l2.300 580m89.350-580l2.300 580m89.350-580l2.300 580m89.350-580l2.300 580m89.350-580l2.300 580m89.350-580l2.300 580m89.350-580l2.300 580m89.350-580l2.300 580m89.350-580l2.300 580m89.350-580l2.300 580m89.350-580l2.300 580m89.350-580l2.300 580m89.350-580l2.300 580m89.350-580l2.300 580"/>
            <path d="M355.500 244v22m91.650-22v22m91.650-22v22m91.650-22v22m91.650-22v22m91.650-22v22m91.650-22v22m91.650-22v22m91.650-22v22m91.650-22v22m91.650-22v22m91.650-22v22m91.650-22v22m91.650-22v22m91.650-22v22m91.650-22v22m91.650-22v22M355.500 853v22m91.650-22v22m91.650-22v22m91.650-22v22m91.650-22v22m91.650-22v22m91.650-22v22m91.650-22v22m91.650-22v22m91.650-22v22m91.650-22v22m91.650-22v22m91.650-22v22m91.650-22v22m91.650-22v22m91.650-22v22m91.650-22v22"/>
          </g>
          <path d="M344 263h1540v5.500H344zM344 849h1540v7H344z"/>
          <g>
            <path d="M884.500 909.500h457v13h-457z" fill="#fff" stroke="#000"/><path d="M884 909h114v14H884zM1113 909h114v14h-114z"/>
            <g class="scale"><text x="867" y="905" textLength="34">0.000</text><text x="1091" y="905" textLength="42">15.000</text><text x="1321" y="905" textLength="82">30.000 (mm)</text><text x="980" y="943" textLength="35">7.500</text><text x="1206" y="943" textLength="43">22.500</text></g>
          </g>
          <path d="M1770 866h65" stroke="#008c00" stroke-width="5"/><path d="M1834 857.500l20 8.500-20 8z" fill="#009a00"/>
          <path d="M1769 866v66" stroke="#2a0000" stroke-width="5"/><path d="M1769.300 866v66" stroke="#d80000" stroke-width="3"/><path d="M1760 931.500h17.500l-8.500 20z" fill="#7d0000"/><path d="M1768 931.500h9.500l-8.500 20z" fill="#a80000"/>
          <circle cx="1769" cy="866" r="8.700" fill="#000070"/><path d="M1769 857l9 9-3 7h-6z" fill="#0000e0"/><path d="M1770 856h7l-5 5" stroke="#00e" stroke-width="1.500" fill="none"/>
          <circle cx="1808.500" cy="906" r="9" fill="url(#cyanBall)"/>
          <text x="1867" y="867" class="ax" fill="#0a9a0a">Y</text><text x="1767" y="966" class="ax" fill="#f02020">X</text>
          <g fill="#fff"><text x="1757" y="248" class="an" textLength="98" lengthAdjust="spacingAndGlyphs">ANSYS</text><text x="1779" y="271" class="rel" textLength="46">2020</text><text x="1832" y="271" class="rel bd" textLength="23" lengthAdjust="spacingAndGlyphs">R2</text><path d="M1751 281h104v1.500h-104z"/><text x="1751" y="304" class="acad" textLength="104">ACADEMIC</text></g>
        </svg>
      </div>
    </section>
    <nav class="right"><span>Key Assignments</span><span>Section Planes</span><span>Mesh Metrics</span></nav>
  </main>

  <div class="messages">Messages</div>
  <footer class="status">
    <span class="ready">Ready</span>
    <svg width="20" height="20" viewBox="0 0 20 20"><path d="M1 5h17v10H8l-3 4v-4H1z" fill="#f2d56a"/><circle cx="11" cy="7" r="7" fill="#0a1fc8"/><text x="8.800" y="11.500" class="inf">i</text></svg>
    <span class="m1">2 Messages</span><span class="m2">No Selection</span>
    <svg class="up" width="12" height="7" viewBox="0 0 12 7"><path d="M0 7l6-7 6 7z" fill="#fff"/></svg>
    <span class="m3">Metric (mm, kg, N, s, mV, mA)</span><span class="m4">Degrees</span><span class="m5">rad/s</span><span class="m6">Celsius</span>
  </footer>
  <footer class="taskbar">
    <div class="start"><svg width="20" height="20" viewBox="0 0 20 20" fill="#fff"><path d="M0 3l8-1.200V9.500H0zM9 1.600L20 0v9.500H9zM0 10.500h8v7.700L0 17zM9 10.500h11V20L9 18.400z"/></svg></div>
    <div class="tsearch"><svg width="22" height="22" viewBox="0 0 22 22" fill="none" stroke="#eee" stroke-width="1.600"><circle cx="13.500" cy="8" r="6.500"/><path d="M9 13l-8 8"/></svg>Type here to search</div>
    <div class="tk"><svg width="20" height="20" viewBox="0 0 20 20" fill="none" stroke="#eee" stroke-width="1.600"><path d="M1 0v3h12V0M1 20v-3h12v3M1 6h12v8H1zM18 0v4M18 10v10M16 7h4" /></svg></div>
    <div class="tk"><svg width="32" height="32" viewBox="0 0 32 32"><circle cx="16" cy="16" r="15" fill="url(#edgeA)"/><path d="M2 11Q7 1 17 1q13 1 14 12-1 8-9 8-4-1-3-4 2-4-2-6Q9 6 2 11z" fill="url(#edgeB)"/><path d="M12 14q-2 12 9 12 5 0 8-3-5 9-15 8-7-3-7-10 1-5 5-7z" fill="#0c4f9e"/><path d="M19 17q-2 4 3 5 5 0 8-4-1 4-3 5-4 1-8-1-2-3 0-5z" fill="#20343c"/></svg></div>
    <div class="tk"><svg width="28" height="25" viewBox="0 0 28 25"><path d="M1 1h11l2 3h13v19H1z" fill="#e8a91c"/><path d="M1 6h26v18H1z" fill="#ffd766"/><path d="M5 24v-9h18v9h-5v-4h-8v4z" fill="#3a94e0"/></svg></div>
    <div class="tk"><svg width="30" height="30" viewBox="0 0 30 30"><path d="M9 8V1h12v7" fill="none" stroke="#eee" stroke-width="2"/><path d="M1 8h28v21H1z" fill="#fafafa"/><path d="M9 13h5v5H9z" fill="#f25022"/><path d="M15.500 13h5v5h-5z" fill="#7fba00"/><path d="M9 19.500h5v5H9z" fill="#00a4ef"/><path d="M15.500 19.500h5v5h-5z" fill="#ffb900"/></svg></div>
    <div class="tk run"><svg width="30" height="30" style="--a:#a8a8a8;--b:#8a8a8a;--d:#bcbcbc"><use href="#tile"/><text x="15" y="21" class="tile-m">WB</text></svg></div>
    <div class="tk run"><svg width="28" height="26" viewBox="0 0 28 26"><path d="M7 2l20 2-2 15L4 17z" fill="#d8dce0" stroke="#888"/><path d="M9 4l16 2-1.500 10L7 15z" fill="#e8f6ff"/><path d="M8 12h3l2-4 3 5 2-4 2 3h3" fill="none" stroke="#2a8ac0" stroke-width="1.500"/><path d="M1 19l9-2 4 6-8 3z" fill="#aaa"/><circle cx="17" cy="22" r="4" fill="#ccc" stroke="#888"/></svg></div>
    <div class="tk run act"><svg width="30" height="30" style="--a:#80508e;--b:#4a2455;--d:#6d3b7b"><use href="#tile"/><text x="15" y="21" class="tile-m">M</text></svg></div>
    <div class="tray">
      <svg width="16" height="9" viewBox="0 0 16 9"><path d="M1 8l7-7 7 7" stroke="#fff" stroke-width="1.500" fill="none"/></svg>
      <svg width="20" height="14" viewBox="0 0 20 14"><path d="M5 3h13v9H4V8" fill="none" stroke="#fff" stroke-width="1.300"/><path d="M6 5h10v5H6zM18 6h2v3h-2zM0 2h6v3L4 7H2L0 5zM1 0h1v2H1zM4 0h1v2H4z" fill="#fff"/></svg>
      <svg width="17" height="17" viewBox="0 0 17 17" fill="none" stroke="#ddd" stroke-width="1.400"><path d="M1 16Q1 2 16 1M5 16Q5 6 16 5M9 16q1-7 7-7"/><circle cx="14" cy="14.500" r="1.500" fill="#fff"/></svg>
      <svg width="21" height="16" viewBox="0 0 21 16" fill="none" stroke="#fff" stroke-width="1.300"><path d="M1 5h3l4-4v14l-4-4H1zM11 6q1 2 0 4"/><path d="M14 4q3 4 0 8M17 2q5 6 0 12" stroke="#778"/></svg>
      <div class="clock">11:18 PM<br>5/4/2021</div>
      <div class="note"><svg width="34" height="34" viewBox="0 0 34 34"><path d="M3 3h20v16h-6l-5 5v-5H3z" fill="#fff"/><path d="M7 7h12M7 11h12M7 15h8" stroke="#1c2a40" stroke-width="1.500"/><circle cx="22" cy="23" r="9.500" fill="#32383f" stroke="#999"/><text x="18.500" y="28" class="nb">2</text></svg></div>
    </div>
  </footer>
</div>
</body>
</html>
```
FILE: styles.css
```css
* { box-sizing: border-box; }
body { margin: 0; background: #eeeef1; }
.defs { position: absolute; width: 0; height: 0; }
svg { display: block; flex: none; overflow: visible; }
i, em { font-style: normal; }

.app {
  width: 1920px; height: 1080px; overflow: hidden;
  display: flex; flex-direction: column;
  font: 14px/14px "Open Sans", "Noto Sans", sans-serif;
  color: #262626; background: #eeeef1; white-space: nowrap;
}

/* title bar and tabs */
.top { height: 62px; border-bottom: 1px solid #c9c9cc; flex: none; }
.titlebar { height: 33px; display: grid; grid-template-columns: 154px 68px 1fr 140px; }
.quick { display: flex; align-items: center; padding: 0 0 5px 10px; height: 33px; gap: 8px; }
.vline { width: 1px; height: 30px; background: #cfcfd4; margin: 0 -1px 0 1px; }
.context { background: #d5e0f2; border-top: 5px solid #2b579a; color: #4272b8; text-align: center; line-height: 28px; }
.title { padding-left: 545px; line-height: 35px; color: #5a5a5a; letter-spacing: -.17px; }
.winbtns { display: flex; justify-content: flex-end; gap: 30px; padding: 10px 15px 0 0; }
.tabs { height: 29px; display: grid; grid-template-columns: 70px 84px 68px 84px 92px 116px 1fr; line-height: 31px; text-align: center; }
.file { background: #0072c6; color: #fff; line-height: 29px; height: 28px; }
.active { background: #fafafa; border: 1px solid #c9c9cc; border-bottom: 0; height: 30px; line-height: 30px; }
.t-home { padding-left: 6px; }
.t-disp, .t-sel, .t-auto { padding-left: 2px; }
.launch { display: flex; justify-content: flex-end; align-items: center; padding-right: 4px; gap: 10px; }
.launch svg { margin-top: -3px; }
.launch-box { width: 200px; height: 26px; line-height: 25px; background: #fff; border: 1px solid #cfd1e3; color: #9b9b9b; text-align: left; padding-left: 4px; margin: -3px -5px 0 0; }
.help { display: flex; align-items: center; }
.help b { width: 17px; height: 17px; border-radius: 9px; background: #4a94ec; color: #fff; font-size: 13px; line-height: 17px; margin-top: -2px; }

/* ribbon */
.ribbon { height: 109px; flex: none; display: flex; background: #fafafa; border-bottom: 1px solid #c9c9cc; }
.group { height: 108px; display: flex; flex-direction: column; background: linear-gradient(#cfcfcf, #cfcfcf) right 8px / 1px 91px no-repeat; }
.items { height: 84px; display: grid; padding-top: 6px; }
.item { height: 78px; text-align: center; padding-top: 3px; letter-spacing: -.05px; }
.item .ic { width: 36px; height: 36px; margin: 0 auto 10px; }
.item .big { height: 40px; margin: -2px auto 8px; }
.off { color: #9d9d9d; }
.dn { width: 8px; height: 5px; margin: 8px auto 0; }
.in { width: 8px; height: 5px; display: inline-block; vertical-align: 4px; margin-left: 3px; }
.label { text-align: center; line-height: 15px; letter-spacing: -.2px; }
.pair { display: flex; flex-direction: column; align-items: center; gap: 21px; padding-top: 14px; }
.row { height: 26.500px; display: flex; align-items: center; gap: 1px; letter-spacing: -.1px; }
.nog { padding-left: 2px; }
.g-outline { width: 110px; } .g-outline .items { grid-template-columns: 62px 31px; padding-left: 12px; } .g-outline .label { padding-left: 5px; }
.g-insert { width: 66px; } .g-insert .label { padding-left: 4px; }
.g-mesh { width: 133px; } .g-mesh .items { grid-template-columns: 58px 60px; padding-left: 5px; }
.g-preview { width: 164px; } .g-preview .items { grid-template-columns: 56px 96px; padding-left: 5px; } .g-preview .label { padding-left: 4px; }
.g-controls { width: 568px; } .g-controls .items { grid-template-columns: 56px 54px 60px 65px 52px 56px 121px 90px; padding-left: 7px; }
.g-controls .stack { padding-left: 5px; }
.g-controls .label { padding-left: 4px; }
.g-edit { width: 589px; } .g-edit .items { grid-template-columns: 182px 56px 76px 98px 51px 58px 46px; padding-left: 12px; }
.g-edit .label { padding-left: 3px; }
.g-edit .row { gap: 3px; letter-spacing: -.05px; }
.g-metrics { width: 200px; } .g-metrics .items { grid-template-columns: 58px 50px 13px 70px; padding-left: 8px; }
.g-metrics .stack .row { gap: 2px; padding-left: 1px; }
.g-metrics .label { padding-left: 4px; }
.g-metrics .edges { padding-left: 2px; }
.on { border: 1.500px solid #4aa0f0; background: #ededf2; padding-top: 2px; }
.isep { width: 1px; height: 78px; background: #d4d4dc; margin-left: 6px; }
.n12 { font: bold 15px "Open Sans", sans-serif; fill: #c8930a; }
.tg { font: bold 8px "Liberation Sans", sans-serif; fill: #888; }
.tg.s { font-size: 7px; }
.tile-m { font: bold 15px "Open Sans", sans-serif; fill: #fff; text-anchor: middle; }
.tile-m.small { font-size: 10px; }

/* work area */
.work { height: 798px; flex: none; display: grid; grid-template-columns: 344px 1540px 36px; }
.left { display: flex; flex-direction: column; width: 339px; }
.phead { height: 25px; margin-top: 1px; display: flex; align-items: center; padding: 0 9px 2px 6px; border: 1px solid #d5d6e6; border-width: 1px 1px 0 0; color: #4a4a4a; }
.ph2 { margin-top: 5px; }
.dots { flex: 1; height: 8px; margin: 0 4px 0 8px; background: radial-gradient(circle, #b5b5b5 .8px, transparent 1px) 0 0 / 4px 4px, radial-gradient(circle, #b5b5b5 .8px, transparent 1px) 2px 2px / 4px 4px; }
.phead svg + svg { margin-left: 10px; }
.sq { width: 13px; height: 12px; border: 1.500px solid #222; border-top-width: 2px; margin: 0 8px 0 10px; }
.find { height: 33px; display: flex; align-items: center; padding: 0 0 1px 12px; }
.grip { width: 8px; height: 22px; background: radial-gradient(circle, #aaa .8px, transparent 1px) 0 0 / 5px 5px, radial-gradient(circle, #aaa .8px, transparent 1px) 2.500px 2.500px / 5px 5px; }
.combo, .search { height: 28px; background: #fff; border: 1px solid #d0d2e4; line-height: 26px; padding-left: 2px; }
.combo { width: 124px; margin-left: 8px; display: flex; align-items: center; justify-content: space-between; padding-right: 3px; letter-spacing: .1px; }
.search { width: 113px; color: #a2a2a2; margin-right: 6px; padding-left: 4px; }
.low { margin: 12px 0 0 8px; }
.scroller { display: grid; grid-template-columns: 318px 20px; background: #fff; overflow: hidden; flex: none; }
.treebox { height: 289px; grid-template-rows: 289px; }
.detbox { height: 420px; }
.sbar { background: #f0f0f0; display: flex; flex-direction: column; align-items: center; padding: 8px 0; }
.flip { transform: scaleY(-1); margin-top: auto; }
.thumb { width: 19px; background: #cdcdcd; }
.th1 { height: 173px; margin-top: 67px; }
.th2 { height: 188px; margin-top: 195px; }
.tree { list-style: none; margin: 0; padding: 0 0 0 49px; background: repeating-linear-gradient(#888 0 1px, transparent 1px 3px) 49px 0 / 1px 100% no-repeat; font: 13.500px/20px "DejaVu Sans Condensed", "DejaVu Sans", sans-serif; font-stretch: condensed; letter-spacing: -.28px; color: #000; }
.tree li { height: 20px; display: flex; align-items: center; }
.tree .l3 { margin-left: 34px; background: repeating-linear-gradient(#888 0 1px, transparent 1px 3px) 0 0 / 1px 100% no-repeat; }
.tree .end { background-size: 1px 10px; }
.tw { width: 17px; height: 1px; margin-left: 2px; background: repeating-linear-gradient(90deg, #888 0 1px, transparent 1px 3px); }
.none { background: none; }
.ck { width: 10px; height: 11px; margin: 9px 2px 0 -1px; }
.ti { width: 17px; height: 17px; margin-right: 5px; }
.cb { width: 15px; height: 15px; margin: 0 1px 0 1px; }
.l3 .ti { margin-right: 7px; }
.l2 span { padding: 0 2px; }
.cur { background: #efefef; }
.pm { width: 11px; height: 11px; border: 1px solid #777; background: #fff; font: bold 12px/9px "DejaVu Sans", sans-serif; text-align: center; margin: 0 -4px 0 -5px; letter-spacing: 0; flex: none; color: #000; }
.tree .pm + .tw { width: 12px; margin-left: 6px; }
.details { padding: 0 1px 0 17px; color: #111; letter-spacing: -.08px; }
.d { height: 22.500px; display: grid; grid-template-columns: 193px 105px; border: 1px solid #a5a5a5; border-top: 0; line-height: 22px; width: 300px; }
.d:first-child { border-top: 1px solid #a5a5a5; line-height: 21px; }
.d span { padding-left: 3px; }
.d em { background: #e8e7e2; border-left: 1px solid #a5a5a5; padding-left: 3px; letter-spacing: 0; }
.d em.w { background: #fff; }
.d .n { letter-spacing: -.3px; }
.c span { display: flex; align-items: center; }
.c span::before { content: ""; width: 15px; height: 15px; border: 1px solid #c5c5c5; margin-right: 5px; }
.d.h { display: flex; align-items: center; font-weight: bold; letter-spacing: -.45px; }
.h .pm { margin: 0 4px 0 -16px; }

.toolbar { height: 33px; margin-left: 231px; display: grid; align-items: center; justify-items: center; border-bottom: 1px solid #dcdce2;
  grid-template-columns: 18px 28px 28px 7px 28px 27px 28px 7px 28px 7px 28px 14px 27px 28px 27px 28px 27px 7px 51px 23px 40px 19px 28px 28px 28px 27px 28px 27px 28px 27px 27px 28px 7px 28px 66px 21px 67px 7px 27px 46px 19px 27px 59px 23px 22px 54px 16px 19px; }
.toolbar .s { width: 1px; height: 25px; background: #d0d0d8; }
.sel { width: 27px; height: 27px; border: 1.500px solid #4aa0f0; background: #e2edf8; display: grid; place-items: center; }
.tx { justify-self: start; padding-left: 1px; color: #333; letter-spacing: -.05px; }
.p6 { padding-left: 6px; }
.emp { padding-left: 2px; letter-spacing: .3px; }
.cr { width: 8px; height: 5px; justify-self: start; margin-left: 1px; }
.more { margin-top: 14px; }
.xyz { font: bold 7px "Liberation Sans", sans-serif; fill: #888; }
.xyz.d { fill: #333; }
.view { height: 765px; background: linear-gradient(#6b8cde, #fff); }
.mesh { width: 1540px; height: 765px; overflow: hidden; }
.scale text { font: 13.500px "DejaVu Sans Condensed", "DejaVu Sans", sans-serif; font-stretch: condensed; }
.ax { font: 14px "Liberation Sans", sans-serif; }
.an { font: bold 34px "Open Sans", sans-serif; stroke: #fff; stroke-width: 1.700; }
.rel { font: 20px "Open Sans", sans-serif; }
.rel.bd { font-weight: 800; }
.acad { font: 18px "Open Sans", sans-serif; opacity: .9; }
.right { writing-mode: vertical-rl; display: flex; align-items: center; color: #555; gap: 33px; padding: 9px 8px 0 0; letter-spacing: .42px; }

.messages { height: 36px; flex: none; padding-left: 9px; line-height: 30px; color: #5a5a5a; }
.status { height: 25px; flex: none; background: #007acc; color: #fff; display: grid; align-items: center; grid-template-columns: 1283px 22px 98px 115px 13px 216px 68px 49px 56px; }
.ready { padding-left: 10px; }
.up { margin: -3px 0 0 -6px; }
.m2 { letter-spacing: .1px; }
.m3 { letter-spacing: .3px; }
.inf { font: bold 12px "Liberation Serif", serif; fill: #fff; }
.taskbar { height: 50px; flex: none; display: flex; color: #fff; background: linear-gradient(90deg, #1e343b, #22353f 50%, #1e2c3e 75%, #1b2740); }
.start { width: 60px; display: grid; place-items: center; }
.tsearch { width: 430px; background: #333; border: 1px solid #6a6a6a; display: flex; align-items: center; gap: 13px; padding-left: 14px; font-size: 17px; color: #ddd; letter-spacing: .14px; }
.tk { width: 62px; display: grid; place-items: center; }
.tsearch + .tk { width: 63px; padding-right: 3px; }
.run { background: linear-gradient(#7cc8f5, #7cc8f5) center bottom / 51px 3px no-repeat; }
.act { background: linear-gradient(#7cc8f5, #7cc8f5) center bottom / 100% 3px no-repeat, #4c5c66; }
.tray { margin-left: auto; display: grid; align-items: center; justify-items: center; grid-template-columns: 40px 38px 42px 38px 88px 48px 16px; }
.clock { text-align: center; line-height: 22.500px; letter-spacing: -.1px; }
.note { padding: 3px 0 0 6px; }
.nb { font: 13px "Open Sans", sans-serif; fill: #fff; }
```
